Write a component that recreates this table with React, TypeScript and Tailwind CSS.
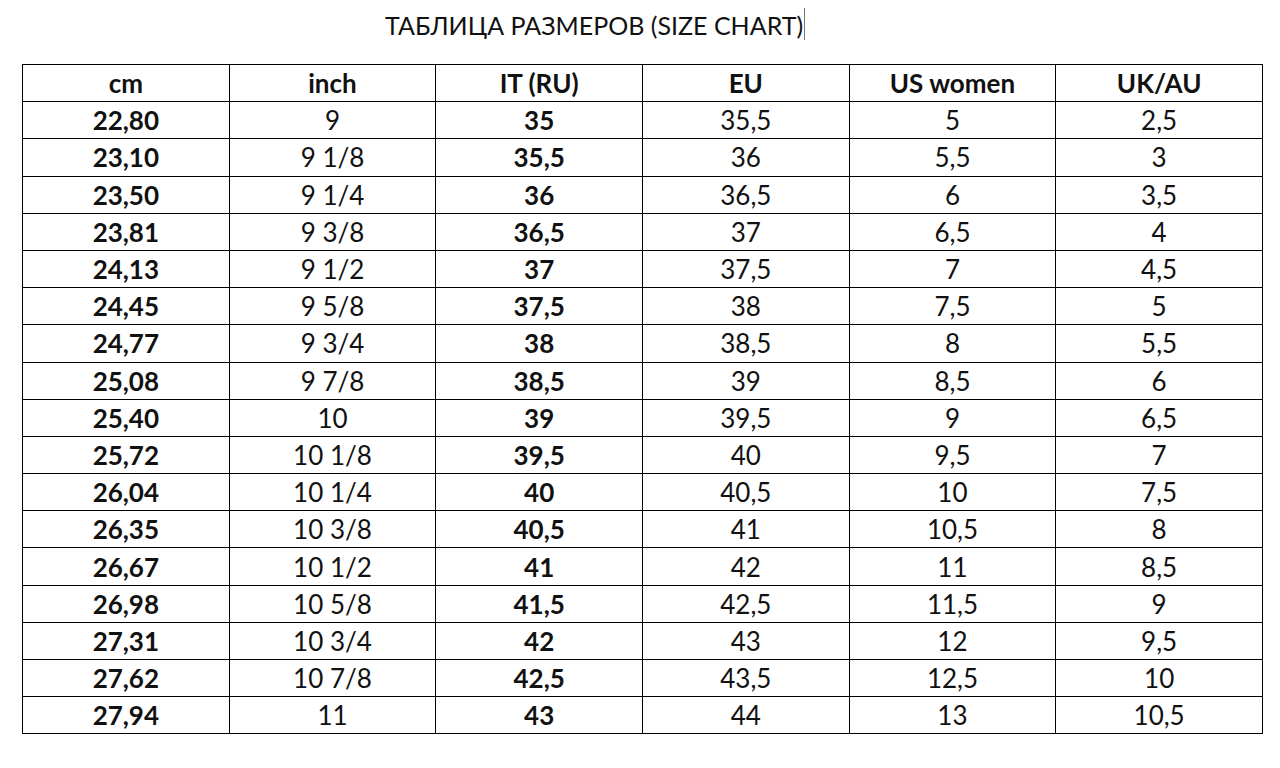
const HEAD = ['cm', 'inch', 'IT (RU)', 'EU', 'US women', 'UK/AU']

// cm, inch, IT (RU), EU, US women, UK/AU
const ROWS: string[][] = [
  ['22,80', '9', '35', '35,5', '5', '2,5'],
  ['23,10', '9 1/8', '35,5', '36', '5,5', '3'],
  ['23,50', '9 1/4', '36', '36,5', '6', '3,5'],
  ['23,81', '9 3/8', '36,5', '37', '6,5', '4'],
  ['24,13', '9 1/2', '37', '37,5', '7', '4,5'],
  ['24,45', '9 5/8', '37,5', '38', '7,5', '5'],
  ['24,77', '9 3/4', '38', '38,5', '8', '5,5'],
  ['25,08', '9 7/8', '38,5', '39', '8,5', '6'],
  ['25,40', '10', '39', '39,5', '9', '6,5'],
  ['25,72', '10 1/8', '39,5', '40', '9,5', '7'],
  ['26,04', '10 1/4', '40', '40,5', '10', '7,5'],
  ['26,35', '10 3/8', '40,5', '41', '10,5', '8'],
  ['26,67', '10 1/2', '41', '42', '11', '8,5'],
  ['26,98', '10 5/8', '41,5', '42,5', '11,5', '9'],
  ['27,31', '10 3/4', '42', '43', '12', '9,5'],
  ['27,62', '10 7/8', '42,5', '43,5', '12,5', '10'],
  ['27,94', '11', '43', '44', '13', '10,5'],
]

// bold columns: cm and IT (RU)
const BOLD = [true, false, true, false, false, false]

export default function App() {
  return (
    <div className="h-[768px] w-[1280px] bg-white font-['Lato','Liberation_Sans',sans-serif] text-[#111]">
      <div className="flex h-[64px] items-start pl-[385px] pt-[7px]">
        <span className="text-[25px] leading-[36px]">ТАБЛИЦА РАЗМЕРОВ (SIZE CHART)</span>
        <span className="ml-[1px] mt-[1px] h-[32px] w-px bg-[#777]" />
      </div>
      <table className="ml-[22px] w-[1241px] table-fixed border-collapse border border-black">
        <thead>
          <tr className="h-[37.2px]">
            {HEAD.map((h) => (
              <th key={h} className="border border-black p-0 text-center text-[26px] font-bold leading-none">
                {h}
              </th>
            ))}
          </tr>
        </thead>
        <tbody>
          {ROWS.map((r) => (
            <tr key={r[0]} className="h-[37.2px]">
              {r.map((c, i) => (
                <td
                  key={i}
                  className={`border border-black p-0 text-center text-[26px] leading-none ${BOLD[i] ? 'font-bold' : 'font-normal'}`}
                >
                  {c}
                </td>
              ))}
            </tr>
          ))}
        </tbody>
      </table>
    </div>
  )
}
